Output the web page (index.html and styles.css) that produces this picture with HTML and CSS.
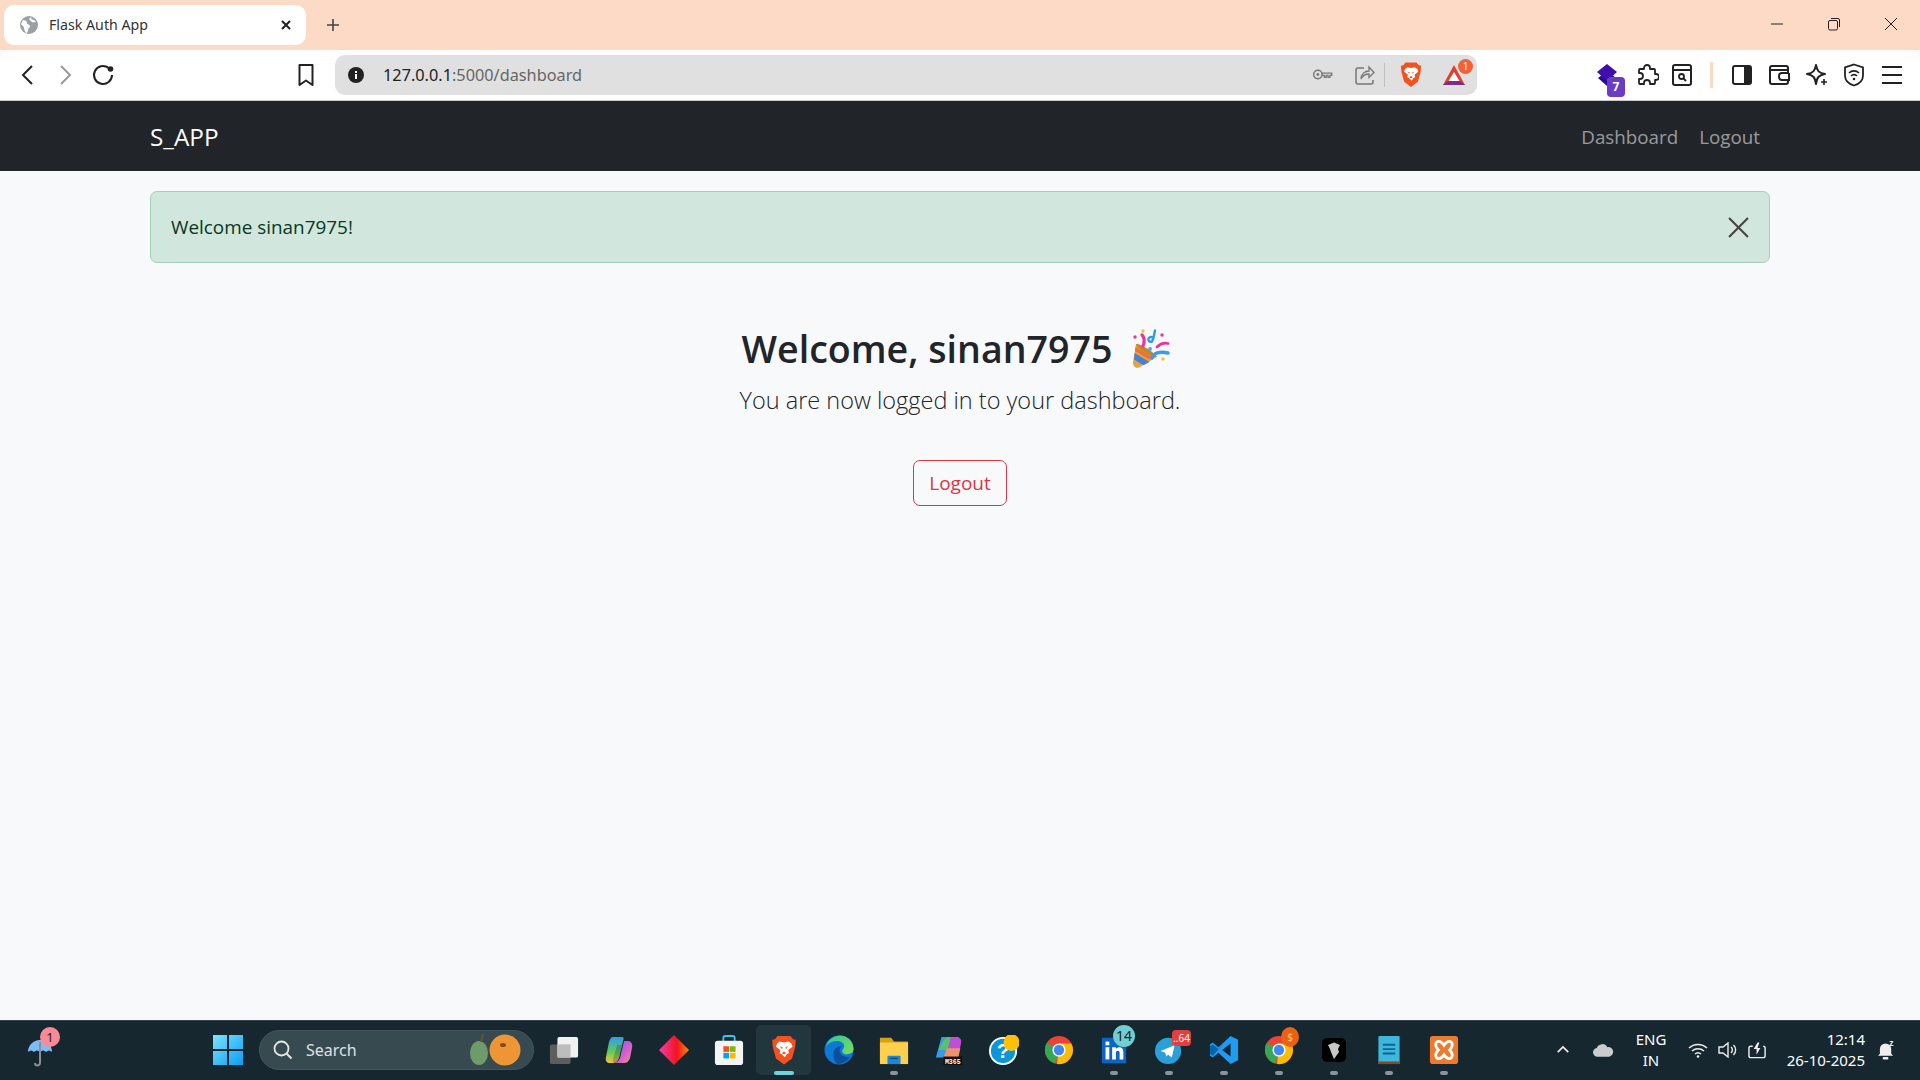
FILE: index.html
```html
<!DOCTYPE html>
<html lang="en">
<head>
    <meta charset="UTF-8">
    <title>Flask Auth App</title>
    <link rel="stylesheet" href="styles.css">
</head>
<body>
    <!-- browser chrome -->
    <div class="tabstrip">
        <div class="tab">
            <svg class="favicon" viewBox="0 0 18 18"><circle cx="9" cy="9" r="9" fill="#9aa0a6"/><path d="M3 4c2 0 4 1 4 3s3 1 3 3-2 2-2 4-1 3-2 3c-1-2-2-3-2-5S1 9 1 8z" fill="#fff"/><path d="M11 1c0 2 1 3 3 3l2 2c-2 0-3 1-4 0s-3-2-3-3z" fill="#fff"/></svg>
            <span class="tab-title">Flask Auth App</span>
            <svg class="tab-close" viewBox="0 0 12 12"><path d="M2 2l8 8M10 2l-8 8" stroke="#222" stroke-width="2"/></svg>
        </div>
        <svg class="new-tab" viewBox="0 0 14 14"><path d="M7 1v12M1 7h12" stroke="#444" stroke-width="1.6"/></svg>
        <div class="window-controls">
            <svg viewBox="0 0 14 14"><path d="M1 7h12" stroke="#222" stroke-width="1"/></svg>
            <svg viewBox="0 0 14 14"><rect x="1.5" y="3.5" width="9" height="9.5" rx="1.5" fill="none" stroke="#222"/><path d="M4 1.5h7a1.5 1.5 0 0 1 1.5 1.5v7" fill="none" stroke="#222"/></svg>
            <svg viewBox="0 0 14 14"><path d="M1 1l12 12M13 1L1 13" stroke="#222" stroke-width="1"/></svg>
        </div>
    </div>

    <div class="toolbar">
        <span class="slot"><svg class="ico" viewBox="0 0 24 24"><path d="M17 3l-9 9 9 9" fill="none" stroke="#222" stroke-width="2"/></svg></span>
        <span class="slot"><svg class="ico" viewBox="0 0 24 24"><path d="M8 3l9 9-9 9" fill="none" stroke="#999" stroke-width="2"/></svg></span>
        <span class="slot"><svg class="ico" viewBox="0 0 24 24"><path d="M21 12a9 9 0 1 1-3.500-7.100" fill="none" stroke="#222" stroke-width="2"/><circle cx="19.500" cy="6" r="2.800" fill="#222"/></svg></span>
        <span class="slot bookmark"><svg class="ico" viewBox="0 0 24 24"><path d="M5.500 2h13v20l-6.500-4.500L5.500 22z" fill="none" stroke="#222" stroke-width="2" stroke-linejoin="round"/></svg></span>

        <div class="urlbar">
            <svg class="info" viewBox="0 0 16 16"><circle cx="8" cy="8" r="8" fill="#222"/><rect x="7" y="7" width="2" height="5" fill="#fff"/><rect x="7" y="4" width="2" height="2" fill="#fff"/></svg>
            <span class="url"><span class="url-host">127.0.0.1</span>:5000/dashboard</span>
            <svg class="key" viewBox="0 0 22 14"><circle cx="6" cy="7" r="4.500" fill="none" stroke="#777" stroke-width="1.6"/><circle cx="6" cy="7" r="1.500" fill="#777"/><path d="M10.500 5.500H21V8h-2v2h-2V8h-2v2h-2V8h-2.500" fill="none" stroke="#777" stroke-width="1.4"/></svg>
            <svg class="share" viewBox="0 0 20 20"><path d="M9 3H3a2 2 0 0 0-2 2v12a2 2 0 0 0 2 2h13a2 2 0 0 0 2-2v-2" fill="none" stroke="#777" stroke-width="1.5"/><path d="M6 14c0-5 4-8 8-8V2l5 5.500-5 5V9c-4 0-6 1-8 5z" fill="none" stroke="#777" stroke-width="1.3"/></svg>
            <span class="url-sep"></span>
            <svg class="brave" viewBox="0 0 24 28"><use href="#lion"/></svg>
            <span class="bat">
                <svg viewBox="0 0 24 22"><path d="M12 1l11 20H1z" fill="#e0412f"/><path d="M1 21l5-4h12l5 4z" fill="#7b2d8e"/><path d="M12 8l5.500 9h-11z" fill="#fff"/></svg>
                <span class="bat-badge">1</span>
            </span>
        </div>

        <span class="slot ext-first">
            <svg class="ico" viewBox="0 0 24 24"><path d="M12 8l9 7-9 8-9-8z" fill="#2b0a85"/><path d="M12 1l10 8-10 9-10-9z" fill="#3f0fae"/></svg>
            <span class="ext-badge">7</span>
        </span>
        <span class="slot puzzle"><svg class="ico" viewBox="0 0 24 24"><path d="M9 5a3 3 0 0 1 6 0v1h4a1 1 0 0 1 1 1v4h1a3 3 0 0 1 0 6h-1v3a1 1 0 0 1-1 1h-4v-1a3 3 0 0 0-6 0v1H5a1 1 0 0 1-1-1v-4h1a3 3 0 0 0 0-6H4V7a1 1 0 0 1 1-1h4z" fill="none" stroke="#222" stroke-width="1.800" stroke-linejoin="round"/></svg></span>
        <span class="slot"><svg class="ico" viewBox="0 0 24 24"><rect x="3" y="2" width="18" height="20" rx="2" fill="none" stroke="#222" stroke-width="2"/><path d="M3 7h18" stroke="#222" stroke-width="2"/><circle cx="11.500" cy="13.500" r="2.500" fill="none" stroke="#222" stroke-width="1.800"/><path d="M13.500 15.500l2.500 2.500" stroke="#222" stroke-width="2"/></svg></span>
        <span class="toolbar-sep"></span>
        <span class="slot tight"><svg class="ico" viewBox="0 0 24 24"><rect x="3" y="3" width="18" height="18" rx="2" fill="none" stroke="#222" stroke-width="2"/><rect x="14" y="3" width="7" height="18" fill="#222"/></svg></span>
        <span class="slot tight"><svg class="ico" viewBox="0 0 24 24"><path d="M21 7V5a2 2 0 0 0-2-2H5a2 2 0 0 0-2 2v14a2 2 0 0 0 2 2h14a2 2 0 0 0 2-2v-2" fill="none" stroke="#222" stroke-width="2"/><path d="M3 7h18v3h-6a3 3 0 0 0-3 3v1a3 3 0 0 0 3 3h7V10" fill="none" stroke="#222" stroke-width="2"/></svg></span>
        <span class="slot tight"><svg class="ico" viewBox="0 0 24 24"><path d="M11 2c1 6 3 8 9 9-6 1-8 3-9 10-1-7-3-9-9-10 6-1 8-3 9-9z" fill="none" stroke="#222" stroke-width="2" stroke-linejoin="round"/><path d="M19 16v6M16 19h6" stroke="#222" stroke-width="1.600"/></svg></span>
        <span class="slot tight"><svg class="ico" viewBox="0 0 24 24"><path d="M12 1.500l9 3v8c0 5-4 8.500-9 10-5-1.500-9-5-9-10v-8z" fill="none" stroke="#222" stroke-width="1.800"/><path d="M7 10a7 7 0 0 1 10 0M9 13a4 4 0 0 1 6 0" fill="none" stroke="#222" stroke-width="1.600"/><circle cx="12" cy="16" r="1.300" fill="#222"/></svg></span>
        <span class="slot tight"><svg class="ico" viewBox="0 0 24 24"><path d="M2 4h20M2 12h20M2 20h20" stroke="#222" stroke-width="2"/></svg></span>
    </div>

    <!-- the flask page -->
    <nav class="navbar">
        <a class="brand" href="#">S_APP</a>
        <div class="nav-links">
            <a href="#">Dashboard</a>
            <a href="#">Logout</a>
        </div>
    </nav>

    <main class="page">
        <div class="alert">
            <span>Welcome sinan7975!</span>
            <svg class="alert-close" viewBox="0 0 20 20"><path d="M1 1l18 18M19 1L1 19" stroke="#444" stroke-width="2"/></svg>
        </div>

        <div class="welcome">
            <h2>Welcome, sinan7975
                <svg class="popper" viewBox="0 0 40 40">
                    <path d="M5 15c4 1 18 9 21 13L8 38.500c-3 1-6-1-6-5z" fill="#e8a23d"/>
                    <path d="M3.500 24l15 9-6 3.300-9.500-5.800z" fill="#4a7fd8"/>
                    <path d="M4.500 18l17.500 10.500-3.500 2-14.500-8.500z" fill="#e8733d"/>
                    <path d="M5 15c4-1 18 8 21 13-5 0-19-7-21-13z" fill="#c98524"/>
                    <path d="M11 6c3 3 3 6 1 11" fill="none" stroke="#f0319a" stroke-width="3.200" stroke-linecap="round"/>
                    <path d="M24 1.500c-1 4-1 8-3 11-3 1-4-1-3.500-3 1-2 3-2 5-.5" fill="none" stroke="#2f9be8" stroke-width="2.400" stroke-linecap="round"/>
                    <path d="M26 18c3-3 7-4.500 11-3.500" fill="none" stroke="#f0319a" stroke-width="2.800" stroke-linecap="round"/>
                    <path d="M21 29c1-5 8-7 16-5" fill="none" stroke="#3f9be8" stroke-width="3.400" stroke-linecap="round"/>
                    <circle cx="19" cy="20" r="2" fill="#5aa9e8"/>
                    <circle cx="4" cy="8" r="1.700" fill="#f0319a"/>
                    <circle cx="12" cy="2" r="1.700" fill="#f0c040"/>
                    <circle cx="31" cy="6" r="1.700" fill="#f0319a"/>
                    <circle cx="32" cy="30" r="1.700" fill="#f0c040"/>
                </svg>
            </h2>
            <p class="lead">You are now logged in to your dashboard.</p>
            <a class="btn-logout" href="#">Logout</a>
        </div>
    </main>

    <!-- windows taskbar -->
    <footer class="taskbar">
        <span class="weather">
            <svg viewBox="0 0 26 30"><path d="M1 15a12 12 0 0 1 24 0c-2-2-4-2-6 0-2-2-4-2-6 0-2-2-4-2-6 0-2-2-4-2-6 0z" fill="#7dbcf5"/><path d="M13 5v21a2.500 2.500 0 0 1-5 0" fill="none" stroke="#8a8f94" stroke-width="2"/></svg>
            <span class="weather-badge">1</span>
        </span>

        <span class="tb-item start">
            <svg class="tb-ico" viewBox="0 0 30 30"><defs><linearGradient id="win" x1="0" y1="0" x2="1" y2="1"><stop offset="0" stop-color="#7ae4ff"/><stop offset="1" stop-color="#0d9cf2"/></linearGradient></defs><path d="M0 0h14v14H0zM16 0h14v14H16zM0 16h14v14H0zM16 16h14v14H16z" fill="url(#win)"/></svg>
        </span>

        <div class="search">
            <svg class="search-ico" viewBox="0 0 20 20"><circle cx="8.500" cy="8.500" r="7" fill="none" stroke="#e6e6e6" stroke-width="1.800"/><path d="M13.500 13.500l5 5" stroke="#e6e6e6" stroke-width="2"/></svg>
            <span>Search</span>
            <svg class="gourds" viewBox="0 0 52 32"><ellipse cx="9" cy="19" rx="9" ry="12" fill="#6f9a6a"/><path d="M11 8l2-8" stroke="#6b5136" stroke-width="2"/><ellipse cx="35" cy="16" rx="15.500" ry="15.500" fill="#ee9636"/><ellipse cx="33" cy="11" rx="3" ry="2" fill="#8a4a20"/></svg>
        </div>

        <span class="tb-item"><svg class="tb-ico" viewBox="0 0 32 32"><rect x="1" y="10" width="22" height="21" rx="2" fill="#5d5d5d"/><rect x="9" y="2" width="22" height="22" rx="2" fill="#f2f2f2"/><rect x="9" y="10" width="14" height="14" fill="#bdbdbd"/></svg></span>
        <span class="tb-item"><svg class="tb-ico" viewBox="0 0 30 30"><defs><linearGradient id="cop-l" x1="0" y1="0" x2="0" y2="1"><stop offset="0" stop-color="#2f9bf0"/><stop offset=".55" stop-color="#5ecb5a"/><stop offset="1" stop-color="#f5c23c"/></linearGradient><linearGradient id="cop-r" x1="0" y1="0" x2="1" y2="1"><stop offset="0" stop-color="#7a5cf0"/><stop offset=".6" stop-color="#d85fd0"/><stop offset="1" stop-color="#f59a6a"/></linearGradient></defs><path d="M9 2h9c2 0 2 2 1 4l-4 17c-1 3-3 5-6 5H6c-3 0-5-2-4-6l3-15c1-3 2-5 4-5z" fill="url(#cop-l)"/><path d="M20 6h4c3 0 5 3 4 7l-2 10c-1 3-3 5-6 5h-9c3-1 4-3 5-5z" fill="url(#cop-r)"/><path d="M13 10h5l-3 13c-1 3-3 5-5 5-2-2-1-4 0-7z" fill="#16272f" opacity=".25"/></svg></span>
        <span class="tb-item"><svg class="tb-ico" viewBox="0 0 30 30"><defs><linearGradient id="ruby" x1="0" y1="0" x2="1" y2="0"><stop offset="0" stop-color="#ee3fb0"/><stop offset=".6" stop-color="#f5121e"/><stop offset="1" stop-color="#ff8a00"/></linearGradient></defs><path d="M15 0l15 15-15 15L0 15z" fill="url(#ruby)"/></svg></span>
        <span class="tb-item"><svg class="tb-ico" viewBox="0 0 30 32"><path d="M9 8V3a2 2 0 0 1 2-2h8a2 2 0 0 1 2 2v5" fill="none" stroke="#3ec1ee" stroke-width="2"/><rect y="6" width="30" height="26" rx="3" fill="#f4f4f4"/><rect x="9" y="12" width="6" height="6" fill="#f25022"/><rect x="16" y="12" width="6" height="6" fill="#7fba00"/><rect x="9" y="19" width="6" height="6" fill="#00a4ef"/><rect x="16" y="19" width="6" height="6" fill="#ffb900"/></svg></span>
        <span class="tb-item active"><svg class="tb-ico" viewBox="0 0 24 28"><g id="lion"><path d="M6 1h12l2.500 3 2.500.500-.500 6.500-3 11-7.500 5.500L4.500 22l-3-11L1 4.500 3.500 4z" fill="#f4511e"/><path d="M8 6l4 1 4-1 3 2 1 3-4 3 .500 3-2 1-1.500 2.500h-.500L10 18l-2-1 .500-3-4-3 1-3z" fill="#fff"/><path d="M8 10.500l3 1.500-1 1zM16 10.500l-3 1.500 1 1zM10 17l2-1.500 2 1.500-2 1z" fill="#f4511e"/></g></svg><i class="run run-active"></i></span>
        <span class="tb-item"><svg class="tb-ico" viewBox="0 0 32 32"><defs><linearGradient id="edge" x1="0" y1="0" x2="1" y2="1"><stop offset="0" stop-color="#2fc3a0"/><stop offset="1" stop-color="#7ade5a"/></linearGradient></defs><circle cx="16" cy="16" r="15.500" fill="#0f78d4"/><path d="M2 13C4 4 12 .5 17 .5c8 0 14.500 6 14.500 14 0 4-3 6-7 6-3 0-5-1-5-3 0-3 2-2 2-6 0-3-4-5-8-5-5 0-10 3-11.500 6.500z" fill="url(#edge)"/><path d="M10 20c0-5 4-8 9-8-3 2-3 5-1 8s6 4 10 3c-3 5-8 8-13 8-3 0-5-6-5-11z" fill="#0b4f9e"/></svg></span>
        <span class="tb-item"><svg class="tb-ico" viewBox="0 0 32 32"><path d="M1 3h12l3 4h15v22H1z" fill="#d9a213"/><path d="M1 8h30v23H1z" fill="#ffd04d"/><rect x="9" y="22" width="14" height="9" rx="1" fill="#1b88d6"/><path d="M12 25h8" stroke="#0c4f85" stroke-width="1.500"/></svg><i class="run"></i></span>
        <span class="tb-item"><svg class="tb-ico" viewBox="0 0 32 32"><path d="M8 2h10l-4 22H2z" fill="#3a9ae8"/><path d="M9 8c2-4 4-6 9-6l-3 14H5z" fill="#56c26a"/><path d="M18 2h6a5 5 0 0 1 5 6l-2 10H14z" fill="#c04fd8"/><path d="M14 14h14l-2 10H10z" fill="#f0906e"/><rect x="10" y="23" width="20" height="9" fill="#111"/><text x="20" y="30.500" class="m365">M365</text></svg></span>
        <span class="tb-item help"><svg class="tb-ico" viewBox="0 0 32 32"><circle cx="15" cy="17" r="14" fill="#0a96d8" stroke="#fff" stroke-width="2"/><text x="15" y="25" class="help-q">?</text><ellipse cx="24" cy="8" rx="8.500" ry="9" fill="#ffc107"/></svg></span>
        <span class="tb-item"><svg class="tb-ico" viewBox="0 0 32 32"><circle cx="16" cy="16" r="15" fill="#ea4335"/><path d="M16 16L3 8.500A15 15 0 0 0 12 30.500z" fill="#34a853"/><path d="M16 9h13a15 15 0 0 1-15 22z" fill="#fbbc05"/><circle cx="16" cy="16" r="7" fill="#fff"/><circle cx="16" cy="16" r="5.500" fill="#4285f4"/></svg></span>
        <span class="tb-item"><svg class="tb-ico" viewBox="0 0 32 32"><rect x="3" y="3" width="26" height="27" rx="1" fill="#0a66c2"/><rect x="7" y="13" width="4" height="13" fill="#fff"/><rect x="7" y="7" width="4" height="4" fill="#fff"/><path d="M14 13h4v2c2-3 8-3 8 3v8h-4v-7c0-3-4-3-4 0v7h-4z" fill="#fff"/></svg><span class="tb-badge count-teal">14</span><i class="run"></i></span>
        <span class="tb-item"><svg class="tb-ico" viewBox="0 0 32 32"><circle cx="15" cy="17" r="14" fill="#2a9fd8"/><path d="M7 17l15-6-3 13-4-3-2 2-1-4z" fill="#fff"/></svg><span class="tb-badge count-red">..64</span><i class="run"></i></span>
        <span class="tb-item"><svg class="tb-ico" viewBox="0 0 32 32"><path d="M23 1l8 4v22l-8 4-13-12-6 5-3-2v-12l3-2 6 5z" fill="#1f9cf0"/><path d="M23 9l-9 7 9 7z" fill="#14263a"/><path d="M23 1L4 22l-3-2v-8l3-2 6 5z" fill="#0065a9"/></svg><i class="run"></i></span>
        <span class="tb-item"><svg class="tb-ico" viewBox="0 0 32 32"><circle cx="16" cy="16" r="15" fill="#ea4335"/><path d="M16 16L3 8.500A15 15 0 0 0 12 30.500z" fill="#34a853"/><path d="M16 9h13a15 15 0 0 1-15 22z" fill="#fbbc05"/><circle cx="16" cy="16" r="7" fill="#fff"/><circle cx="16" cy="16" r="5.500" fill="#4285f4"/></svg><span class="tb-badge count-orange">$</span><i class="run"></i></span>
        <span class="tb-item"><svg class="tb-ico small" viewBox="0 0 24 24"><rect width="24" height="24" rx="5" fill="#000"/><path d="M6 7l6-2.500L18 7l-2 4 1 3-5 7-3-7-1-3z" fill="#c8c8c8"/></svg><i class="run"></i></span>
        <span class="tb-item"><svg class="tb-ico" viewBox="0 0 26 34"><rect x="1" y="1" width="24" height="32" rx="1" fill="#3fb6dc"/><rect x="1" y="30" width="24" height="3" fill="#8a4a20"/><path d="M6 11h14M6 16h14M6 21h14" stroke="#0a6590" stroke-width="2.200"/></svg><i class="run"></i></span>
        <span class="tb-item"><svg class="tb-ico" viewBox="0 0 32 32"><rect x="1" y="1" width="30" height="30" rx="3" fill="#ee7a2d"/><path d="M9 7c3-1 5 1 7 4 2-3 4-5 7-4 3 2 2 6-1 9 3 3 4 7 1 9-3 1-5-1-7-4-2 3-4 5-7 4-3-2-2-6 1-9-3-3-4-7-1-9z" fill="none" stroke="#fff" stroke-width="3"/></svg><i class="run"></i></span>

        <div class="tray">
            <svg class="tray-chevron" viewBox="0 0 16 10"><path d="M2 8l6-6 6 6" fill="none" stroke="#eee" stroke-width="2"/></svg>
            <svg class="tray-cloud" viewBox="0 0 22 14"><path d="M5 14a4.500 4.500 0 0 1-1-9 6 6 0 0 1 11-1 5 5 0 0 1 2 10z" fill="#c9cdd0"/></svg>
            <div class="lang"><span>ENG</span><span>IN</span></div>
            <svg class="tray-wifi" viewBox="0 0 20 16"><path d="M1 6a13 13 0 0 1 18 0M4 9a9 9 0 0 1 12 0M7 12a4.500 4.500 0 0 1 6 0" fill="none" stroke="#eee" stroke-width="1.500"/><circle cx="10" cy="14.500" r="1.300" fill="#eee"/></svg>
            <svg class="tray-vol" viewBox="0 0 20 16"><path d="M1 5h4l5-4v14l-5-4H1z" fill="none" stroke="#eee" stroke-width="1.400"/><path d="M13 5a4 4 0 0 1 0 6M15.500 3a7 7 0 0 1 0 10" fill="none" stroke="#eee" stroke-width="1.400"/></svg>
            <svg class="tray-batt" viewBox="0 0 20 18"><path d="M5 5H3a2 2 0 0 0-2 2v8a2 2 0 0 0 2 2h13a2 2 0 0 0 2-2V7a2 2 0 0 0-2-2" fill="none" stroke="#eee" stroke-width="1.500"/><path d="M10 1L6 8h3v6l4-7h-3l2-6z" fill="#eee"/></svg>
            <div class="clock"><span>12:14</span><span>26-10-2025</span></div>
            <svg class="tray-bell" viewBox="0 0 18 22"><path d="M8 4a6 6 0 0 1 6 6v5l2 2H0l2-2v-5a6 6 0 0 1 6-6z" fill="#eee"/><rect x="5" y="18.500" width="6" height="2.500" rx="1" fill="#eee"/><text x="12" y="7" class="zz">z</text></svg>
        </div>
    </footer>
</body>
</html>
```

FILE: styles.css
```css
* {
    box-sizing: border-box;
    margin: 0;
    padding: 0;
}

html, body {
    height: 100%;
}

body {
    display: flex;
    flex-direction: column;
    height: 1080px;
    overflow: hidden;
    font-family: "Open Sans", "Noto Sans", Arial, sans-serif;
    background-color: #f8f9fa;
    color: #212529;
}

a {
    text-decoration: none;
}

/* tab strip */
.tabstrip {
    display: flex;
    align-items: center;
    flex: 0 0 50px;
    padding: 0 4px;
    background-color: #fddac6;
}

.tab {
    display: flex;
    align-items: center;
    width: 302px;
    height: 40px;
    padding: 0 14px 0 16px;
    background: #fff;
    border-radius: 10px;
}

.favicon {
    width: 18px;
    height: 18px;
}

.tab-title {
    flex: 1;
    margin: 0 0 2px 11px;
    font-family: "Noto Sans", Arial, sans-serif;
    font-size: 14.2px;
    color: #333;
}

.tab-close {
    width: 12px;
    height: 12px;
}

.new-tab {
    width: 14px;
    height: 14px;
    margin-left: 20px;
}

.window-controls {
    display: flex;
    gap: 43px;
    margin-left: auto;
    margin-right: 18px;
    margin-bottom: 2px;
}

.window-controls svg {
    width: 14px;
    height: 14px;
}

/* toolbar */
.toolbar {
    display: flex;
    align-items: center;
    flex: 0 0 51px;
    padding: 0 0 1px 8px;
    background: #fff;
    border-bottom: 1px solid #c9c9c9;
    border-radius: 12px 12px 0 0;
}

.slot {
    position: relative;
    display: flex;
    align-items: center;
    justify-content: center;
    flex: 0 0 38px;
}

.slot.tight {
    flex-basis: 37.5px;
}

.ico {
    width: 24px;
    height: 24px;
}

.bookmark {
    margin-left: 165px;
}

.urlbar {
    display: flex;
    align-items: center;
    width: 1142px;
    height: 40px;
    margin-left: 10px;
    padding: 0 11px 0 13px;
    background: #e0e0e0;
    border-radius: 10px;
}

.info {
    width: 16px;
    height: 16px;
}

.url {
    flex: 1;
    margin-left: 19px;
    font-family: "Noto Sans", Arial, sans-serif;
    font-size: 16.3px;
    color: #666;
}

.url-host {
    color: #222;
}

.key {
    width: 21px;
    height: 13px;
    margin-right: -1px;
}

.share {
    width: 20px;
    height: 20px;
    margin-left: 23px;
}

.url-sep {
    width: 1px;
    height: 24px;
    margin: 0 15px 0 9px;
    background: #c0c0c0;
}

.brave {
    width: 22px;
    height: 27px;
}

.bat {
    position: relative;
    width: 24px;
    height: 22px;
    margin-left: 20px;
}

.bat svg {
    display: block;
    width: 24px;
    height: 22px;
}

.bat-badge {
    position: absolute;
    top: -5px;
    right: -7px;
    width: 15px;
    height: 15px;
    font-family: "Noto Sans", Arial, sans-serif;
    font-size: 10px;
    line-height: 15px;
    text-align: center;
    color: #fff;
    background: #f4603a;
    border-radius: 50%;
}

.ext-first {
    margin-left: 111px;
}

.ext-badge {
    position: absolute;
    right: 1px;
    bottom: -10px;
    width: 18px;
    height: 20px;
    font-family: "Noto Sans", Arial, sans-serif;
    font-size: 12px;
    font-weight: 700;
    line-height: 20px;
    text-align: center;
    color: #fff;
    background: #6b3bc4;
    border-radius: 4px;
}

.puzzle {
    margin: 0 -3px 0 2px;
}

.toolbar-sep {
    width: 3px;
    height: 26px;
    margin: 0 10px 0 9px;
    background: #fddac6;
}

/* navbar */
.navbar {
    display: flex;
    align-items: center;
    justify-content: space-between;
    flex: 0 0 70px;
    padding: 1px 150px 0;
    background-color: #212529;
}

.brand {
    font-size: 24.3px;
    color: #fff;
}

.nav-links {
    display: flex;
    gap: 21px;
    padding-right: 10px;
}

.nav-links a {
    font-size: 18.8px;
    color: rgba(255, 255, 255, 0.55);
}

/* page */
.page {
    flex: 1;
    padding: 20px 150px 0;
}

.alert {
    display: flex;
    align-items: center;
    justify-content: space-between;
    height: 72px;
    padding: 0 20px;
    font-size: 18.9px;
    color: #0a3622;
    background-color: #d1e7dd;
    border: 1px solid #a3cfbb;
    border-radius: 7px;
}

.alert-close {
    width: 21px;
    height: 21px;
}

.welcome {
    display: flex;
    flex-direction: column;
    align-items: center;
    padding-top: 62px;
}

h2 {
    display: flex;
    align-items: center;
    gap: 18px;
    padding-right: 8px;
    font-size: 37.6px;
    font-weight: 600;
    line-height: 48px;
}

.popper {
    width: 40px;
    height: 40px;
}

.lead {
    margin-top: 8px;
    font-size: 23.5px;
    font-weight: 300;
    line-height: 38px;
}

.btn-logout {
    display: block;
    width: 94px;
    height: 46px;
    margin-top: 41px;
    font-size: 19px;
    line-height: 44px;
    text-align: center;
    color: #dc3545;
    border: 1px solid #dc3545;
    border-radius: 7px;
}

/* taskbar */
.taskbar {
    display: flex;
    align-items: center;
    flex: 0 0 60px;
    padding: 0 0 2px 27px;
    background-color: #16272f;
    border-top: 1px solid #35444b;
}

.weather {
    position: relative;
    width: 26px;
    height: 30px;
    margin-top: 4px;
}

.weather svg {
    display: block;
    width: 26px;
    height: 30px;
}

.weather-badge {
    position: absolute;
    top: -10px;
    right: -7px;
    width: 20px;
    height: 20px;
    font-family: "Noto Sans", Arial, sans-serif;
    font-size: 13px;
    line-height: 20px;
    text-align: center;
    color: #222;
    background: #fb8a96;
    border-radius: 50%;
}

.tb-item {
    position: relative;
    display: flex;
    align-items: center;
    justify-content: center;
    flex: 0 0 55px;
    height: 50px;
}

.start {
    margin-left: 147px;
}

.tb-ico {
    width: 30px;
    height: 30px;
}

.tb-ico.small {
    width: 24px;
    height: 24px;
}

.active {
    background: #22363e;
    border-radius: 5px;
}

.run {
    position: absolute;
    bottom: 0;
    left: 50%;
    width: 8px;
    height: 4px;
    margin-left: -4px;
    background: #8a9499;
    border-radius: 2px;
}

.run-active {
    width: 20px;
    margin-left: -10px;
    background: #6fd3dc;
}

.tb-badge {
    position: absolute;
    font-family: "Noto Sans", Arial, sans-serif;
    text-align: center;
}

.count-teal {
    top: 0;
    right: 6px;
    width: 22px;
    height: 22px;
    font-size: 14px;
    line-height: 22px;
    color: #222;
    background: #6fcfd3;
    border-radius: 50%;
}

.count-red {
    top: 5px;
    right: 5px;
    width: 19px;
    height: 16px;
    font-size: 10px;
    line-height: 16px;
    color: #fff;
    background: #e63e3e;
    border-radius: 4px;
}

.count-orange {
    top: 2px;
    right: 7px;
    width: 18px;
    height: 20px;
    font-size: 10px;
    line-height: 20px;
    color: #ffc28a;
    background: #e8620f;
    border-radius: 50%;
}

.m365 {
    font-family: "Liberation Mono", monospace;
    font-size: 7px;
    font-weight: 700;
    text-anchor: middle;
    fill: #fff;
}

.help-q {
    font-family: "Liberation Sans", sans-serif;
    font-size: 22px;
    font-weight: 700;
    text-anchor: middle;
    fill: #fff;
}

.zz {
    font-family: "Liberation Sans", sans-serif;
    font-size: 9px;
    font-weight: 700;
    fill: #eee;
}

.search {
    display: flex;
    align-items: center;
    width: 275px;
    height: 40px;
    margin: 0 2px 0 4px;
    padding: 0 10px 0 13px;
    font-family: "Noto Sans", Arial, sans-serif;
    font-size: 16px;
    color: #e0e0e0;
    background: #364a50;
    border: 1px solid #435660;
    border-radius: 20px;
}

.search-ico {
    width: 20px;
    height: 20px;
    margin-right: 13px;
}

.gourds {
    width: 54px;
    height: 32px;
    margin-left: auto;
}

/* system tray */
.tray {
    display: flex;
    align-items: center;
    margin-left: auto;
    padding-right: 25px;
    font-family: "Noto Sans", Arial, sans-serif;
    color: #fff;
}

.tray-chevron {
    width: 14px;
    height: 9px;
}

.tray-cloud {
    width: 21px;
    height: 14px;
    margin-left: 23px;
}

.lang {
    display: flex;
    flex-direction: column;
    align-items: center;
    width: 40px;
    margin-left: 17px;
    font-size: 15px;
    line-height: 21px;
}

.tray-wifi {
    width: 20px;
    height: 16px;
    margin-left: 17px;
}

.tray-vol {
    width: 20px;
    height: 16px;
    margin-left: 10px;
}

.tray-batt {
    width: 19px;
    height: 18px;
    margin-left: 10px;
}

.clock {
    display: flex;
    flex-direction: column;
    align-items: flex-end;
    width: 88px;
    margin-left: 10px;
    font-size: 15px;
    line-height: 21px;
}

.tray-bell {
    width: 17px;
    height: 22px;
    margin-left: 13px;
}
```
